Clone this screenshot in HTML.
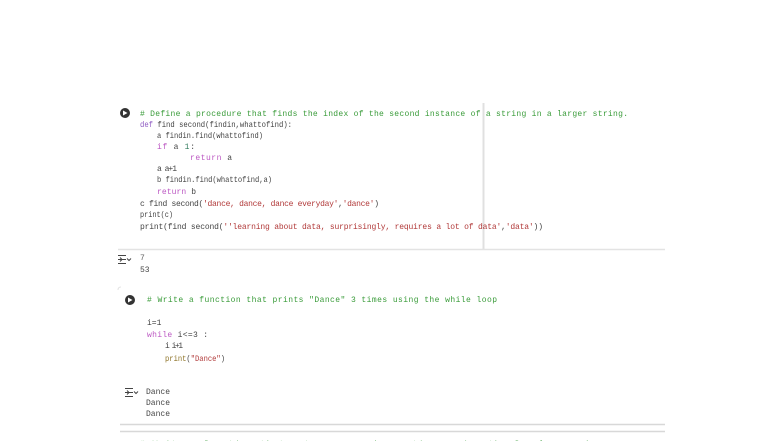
<!DOCTYPE html>
<html><head><meta charset="utf-8"><style>
html,body{margin:0;padding:0;background:#fff;width:784px;height:441px;overflow:hidden}
svg{display:block}
text{font-family:"Liberation Mono",monospace;font-size:8px}
.t{opacity:.85}
</style></head><body>
<svg width="784" height="441" viewBox="0 0 784 441">
<line x1="483.5" y1="103" x2="483.5" y2="249" stroke="#e0e0e0" stroke-width="2"/>
<line x1="118" y1="249.5" x2="665" y2="249.5" stroke="#e3e3e3" stroke-width="1.5"/>
<circle cx="125" cy="113" r="5" fill="#333"/>
<path d="M123 110.5 L127.5 113 L123 115.5Z" fill="#fff"/>
<g class="t">
<text x="140" y="116" fill="#178a17" textLength="488" lengthAdjust="spacing"># Define a procedure that finds the index of the second instance of a string in a larger string.</text>
<text x="140" y="127" textLength="152" lengthAdjust="spacingAndGlyphs"><tspan fill="#7a3db8">def</tspan><tspan fill="#222">  find second(findin,whattofind):</tspan></text>
<text x="157" y="138" fill="#222" textLength="106" lengthAdjust="spacingAndGlyphs">a findin.find(whattofind)</text>
<text x="157" y="149" textLength="38" lengthAdjust="spacing"><tspan fill="#b03ab8">if</tspan><tspan fill="#222"> a  </tspan><tspan fill="#116644">1</tspan><tspan fill="#222">:</tspan></text>
<text x="190" y="160" textLength="42" lengthAdjust="spacing"><tspan fill="#b03ab8">return</tspan><tspan fill="#222">  a</tspan></text>
<text x="157" y="171" fill="#222" textLength="20" lengthAdjust="spacing">a a+1</text>
<text x="157" y="182" fill="#222" textLength="115" lengthAdjust="spacingAndGlyphs">b findin.find(whattofind,a)</text>
<text x="157" y="194" textLength="39" lengthAdjust="spacing"><tspan fill="#b03ab8">return</tspan><tspan fill="#222">  b</tspan></text>
<text x="140" y="206" textLength="239" lengthAdjust="spacing"><tspan fill="#222">c find second(</tspan><tspan fill="#a31515">'dance,  dance,  dance everyday'</tspan><tspan fill="#222">,</tspan><tspan fill="#a31515">'dance'</tspan><tspan fill="#222">)</tspan></text>
<text x="140" y="217" fill="#222" textLength="33" lengthAdjust="spacingAndGlyphs">print(c)</text>
<text x="140" y="229" textLength="403" lengthAdjust="spacing"><tspan fill="#222">print(find second(</tspan><tspan fill="#a31515">''learning  about  data,  surprisingly,  requires  a  lot  of  data'</tspan><tspan fill="#222">,</tspan><tspan fill="#a31515">'data'</tspan><tspan fill="#222">))</tspan></text>
</g>
<g stroke="#444" stroke-width="1" fill="none"><path d="M118 255.5h8M118 259.5h8M118 263.5h8M120 257.5l2 2-2 2"/><path d="M127 258.5l2 2 2-2"/></g>
<text x="140" y="260" fill="#666" font-size="7">7</text>
<text x="140" y="272" fill="#444" font-size="7">53</text>
<path d="M118 290 Q118 287 121 287" stroke="#e3e3e3" fill="none"/>
<circle cx="130" cy="300" r="5" fill="#333"/>
<path d="M128 297.5 L132.5 300 L128 302.5Z" fill="#fff"/>
<g class="t">
<text x="147" y="302" fill="#178a17" textLength="350" lengthAdjust="spacing"># Write  a  function  that  prints  "Dance"  3  times  using  the  while  loop</text>
<text x="147" y="325" fill="#222">i=1</text>
<text x="147" y="337" textLength="61" lengthAdjust="spacing"><tspan fill="#b03ab8">while</tspan><tspan fill="#222">  i&lt;=3  :</tspan></text>
<text x="165" y="348" fill="#222" textLength="18" lengthAdjust="spacing">i i+1</text>
<text x="165" y="361" textLength="60" lengthAdjust="spacingAndGlyphs"><tspan fill="#7a5a00">print</tspan><tspan fill="#222">(</tspan><tspan fill="#a31515">"Dance"</tspan><tspan fill="#222">)</tspan></text>
</g>
<g stroke="#444" stroke-width="1" fill="none"><path d="M125 388.5h8M125 392.5h8M125 396.5h8M127 390.5l2 2-2 2"/><path d="M134 391.5l2 2 2-2"/></g>
<text x="146" y="394" fill="#444" font-size="7.5">Dance</text>
<text x="146" y="405" fill="#444" font-size="7.5">Dance</text>
<text x="146" y="416" fill="#444" font-size="7.5">Dance</text>
<line x1="120" y1="424.5" x2="665" y2="424.5" stroke="#d8d8d8" stroke-width="1.5"/>
<line x1="120" y1="431.5" x2="665" y2="431.5" stroke="#d8d8d8" stroke-width="1.5"/>
<text x="140" y="446" fill="#178a17" opacity="0.5" textLength="480" lengthAdjust="spacing"># Write  a  function  that  returns  a  number  n  times  using  the  for  loop  and  more</text>
</svg>
</body></html>
